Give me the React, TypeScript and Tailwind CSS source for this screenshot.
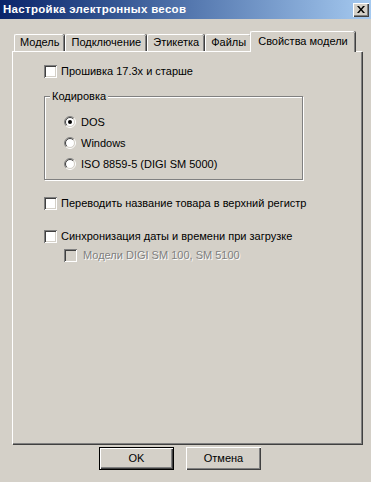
import React from "react";

const raised =
  "shadow-[inset_1px_1px_0_#ffffff,inset_-1px_-1px_0_#404040,inset_-2px_-2px_0_#808080]";

function CheckBox({ disabled }: { disabled?: boolean }) {
  return (
    <div
      className={`w-[13px] h-[13px] shrink-0 ${
        disabled ? "bg-[#d4d0c8]" : "bg-white"
      } shadow-[inset_1px_1px_0_#808080,inset_-1px_-1px_0_#ffffff,inset_2px_2px_0_#404040,inset_-2px_-2px_0_#d4d0c8]`}
    />
  );
}

function Radio({ checked }: { checked?: boolean }) {
  return (
    <svg width="12" height="12" viewBox="0 0 12 12" className="shrink-0">
      <circle cx="6" cy="6" r="4.5" fill="#ffffff" />
      <path d="M2.111 9.889 A5.5 5.5 0 0 1 9.889 2.111" stroke="#808080" strokeWidth="1" fill="none" />
      <path d="M9.889 2.111 A5.5 5.5 0 0 1 2.111 9.889" stroke="#ffffff" strokeWidth="1" fill="none" />
      <path d="M2.818 9.182 A4.5 4.5 0 0 1 9.182 2.818" stroke="#404040" strokeWidth="1" fill="none" />
      <path d="M9.182 2.818 A4.5 4.5 0 0 1 2.818 9.182" stroke="#d4d0c8" strokeWidth="1" fill="none" />
      {checked && <circle cx="6" cy="6" r="2" fill="#000000" />}
    </svg>
  );
}

function Tab({ label, active, first }: { label: string; active?: boolean; first?: boolean }) {
  if (active) {
    return (
      <div className="relative z-10 -mx-[2px] -mb-[1px] h-[21px] px-[7px] pt-[3px] bg-[#d4d0c8] border-l border-t border-white rounded-tl-[2px] rounded-tr-[2px] shadow-[inset_-1px_0_0_#808080,1px_0_0_#404040]">
        {label}
      </div>
    );
  }
  return (
    <div
      className={`h-[17px] px-[5px] pt-[1px] bg-[#d4d0c8] border-t border-white rounded-tl-[2px] rounded-tr-[2px] shadow-[inset_-1px_0_0_#808080,1px_0_0_#404040] ${
        first ? "border-l ml-[2px]" : "border-l"
      } mr-[1px]`}
    >
      {label}
    </div>
  );
}

export default function App() {
  return (
    <div
      className="w-[371px] h-[482px] bg-[#d4d0c8] flex flex-col text-[11px] text-black leading-[13px] overflow-hidden"
      style={{ fontFamily: '"Liberation Sans", Arial, sans-serif' }}
    >
      {/* Title bar */}
      <div className="h-[19px] bg-gradient-to-r from-[#0a246a] to-[#a6caf0] flex items-center justify-between pl-[3px] pr-[2px]">
        <span className="text-white font-bold text-[11.5px] tracking-[0.3px]">Настройка электронных весов</span>
        <div className={`w-[16px] h-[14px] bg-[#d4d0c8] ${raised} flex items-center justify-center`}>
          <svg width="8" height="7" viewBox="0 0 8 7">
            <path d="M0 0h2l2 2.5L6 0h2L5 3.5 8 7H6L4 4.5 2 7H0l3-3.5z" fill="#000" />
          </svg>
        </div>
      </div>

      {/* Tabs */}
      <div className="mt-[12px] ml-[12px] w-[350px] flex flex-col">
        <div className="flex items-end h-[20px]">
          <Tab label="Модель" first />
          <Tab label="Подключение" />
          <Tab label="Этикетка" />
          <Tab label="Файлы" />
          <Tab label="Свойства модели" active />
        </div>
        <div className="h-[393px] border-l border-t border-white shadow-[inset_-1px_-1px_0_#808080,1px_1px_0_#404040] pl-[31px] pr-[50px] pt-[13px] flex flex-col">
          <div className="flex items-center gap-[4px] h-[13px]">
            <CheckBox />
            <span>Прошивка 17.3х и старше</span>
          </div>

          <div className="relative mt-[18px] h-[84px] w-[259px] border border-[#808080] shadow-[1px_1px_0_#ffffff,inset_1px_1px_0_#ffffff]">
            <span className="absolute -top-[7px] left-[5px] px-[2px] bg-[#d4d0c8]">Кодировка</span>
            <div className="flex flex-col pl-[19px] pt-[19px] gap-[9px]">
              <div className="flex items-center gap-[5px] h-[12px]">
                <Radio checked />
                <span>DOS</span>
              </div>
              <div className="flex items-center gap-[5px] h-[12px]">
                <Radio />
                <span>Windows</span>
              </div>
              <div className="flex items-center gap-[5px] h-[12px]">
                <Radio />
                <span>ISO 8859-5 (DIGI SM 5000)</span>
              </div>
            </div>
          </div>

          <div className="flex items-center gap-[4px] h-[13px] mt-[17px]">
            <CheckBox />
            <span>Переводить название товара в верхний регистр</span>
          </div>
          <div className="flex items-center gap-[4px] h-[13px] mt-[20px]">
            <CheckBox />
            <span>Синхронизация даты и времени при загрузке</span>
          </div>
          <div className="flex items-center gap-[6px] h-[13px] mt-[6px] ml-[20px]">
            <CheckBox disabled />
            <span className="text-[#808080] [text-shadow:1px_1px_0_#ffffff]">Модели DIGI SM 100, SM 5100</span>
          </div>
        </div>
      </div>

      {/* Buttons */}
      <div className="flex mt-[3px] ml-[99px] gap-[12px]">
        <div className="w-[75px] h-[23px] border border-black bg-[#d4d0c8] shadow-[inset_1px_1px_0_#ffffff,inset_-1px_-1px_0_#404040,inset_-2px_-2px_0_#808080] flex items-center justify-center">
          OK
        </div>
        <div className={`w-[75px] h-[23px] bg-[#d4d0c8] ${raised} flex items-center justify-center`}>
          Отмена
        </div>
      </div>
    </div>
  );
}
